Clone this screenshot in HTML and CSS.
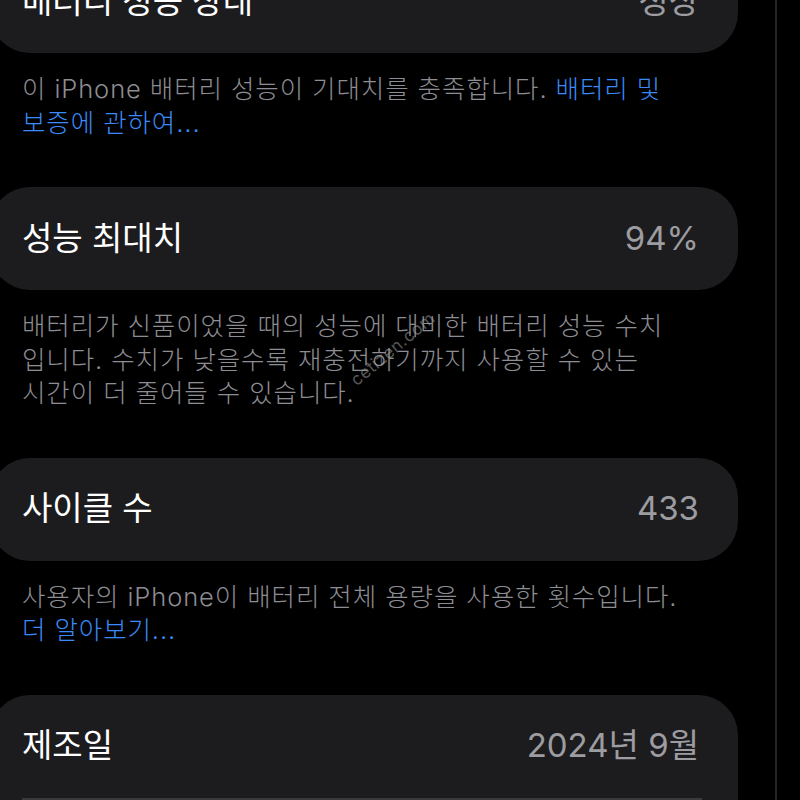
FILE: index.html
```html
<!DOCTYPE html>
<html lang="ko">
<head>
<meta charset="utf-8">
<title>배터리 성능 상태</title>
<link rel="stylesheet" href="styles.css">
</head>
<body>
<div class="screen">
  <div class="group first">
    <div class="cell"><span class="label">배터리 성능 상태</span><span class="value">정상</span></div>
  </div>
  <p class="footnote">이 iPhone 배터리 성능이 기대치를 충족합니다. <a class="link" href="#">배터리 및 보증에 관하여...</a></p>

  <div class="group">
    <div class="cell"><span class="label">성능 최대치</span><span class="value">94%</span></div>
  </div>
  <p class="footnote">배터리가 신품이었을 때의 성능에 대비한 배터리 성능 수치<wbr>입니다. 수치가 낮을수록 재충전하기까지 사용할 수 있는 시간이 더 줄어들 수 있습니다.</p>

  <div class="group">
    <div class="cell"><span class="label">사이클 수</span><span class="value">433</span></div>
  </div>
  <p class="footnote">사용자의 iPhone이 배터리 전체 용량을 사용한 횟수입니다. <a class="link" href="#">더 알아보기...</a></p>

  <div class="group">
    <div class="cell"><span class="label">제조일</span><span class="value">2024년 9월</span></div>
    <div class="sep"></div>
    <div class="cell"><span class="label">최초 사용</span><span class="value">2024년 10월</span></div>
  </div>

  <span class="watermark">cetizen.com</span>
</div>
</body>
</html>
```
FILE: styles.css
```css
html, body {
  margin: 0;
  padding: 0;
  background: #000;
  height: 800px;
  overflow: hidden;
}

.screen {
  position: relative;
  margin-left: -10px;
  width: 787px;
  height: 800px;
  box-sizing: border-box;
  border-right: 2px solid #262628;
  font-family: Inter, "Noto Sans CJK KR", sans-serif;
  overflow: hidden;
}

.group {
  width: 748px;
  background: #1c1c1e;
  border-radius: 40px;
  overflow: hidden;
}

.first {
  margin-top: -50px;
}

.cell {
  height: 103px;
  display: flex;
  align-items: center;
  justify-content: space-between;
  padding: 0 39px 0 32px;
}

.label {
  color: #fff;
  font-size: 33px;
  line-height: 1.2;
}

.value {
  color: #9c9ca1;
  font-size: 33px;
  line-height: 1.2;
}

.sep {
  height: 2px;
  background: #3a3a3c;
  margin: 0 36px 0 32px;
}

.footnote {
  margin: 0;
  width: 748px;
  box-sizing: border-box;
  padding: 19px 50px 48px 32px;
  font-size: 25.5px;
  letter-spacing: 0.9px;
  font-weight: 300;
  line-height: 33.5px;
  color: #8d8d93;
  word-break: keep-all;
}

.link {
  color: #3b8af7;
  text-decoration: none;
}

.watermark {
  position: absolute;
  left: 363px;
  top: 372px;
  font-size: 17px;
  color: rgba(160, 160, 160, 0.55);
  transform: rotate(-40deg);
  transform-origin: left center;
  letter-spacing: 0.5px;
}
```
